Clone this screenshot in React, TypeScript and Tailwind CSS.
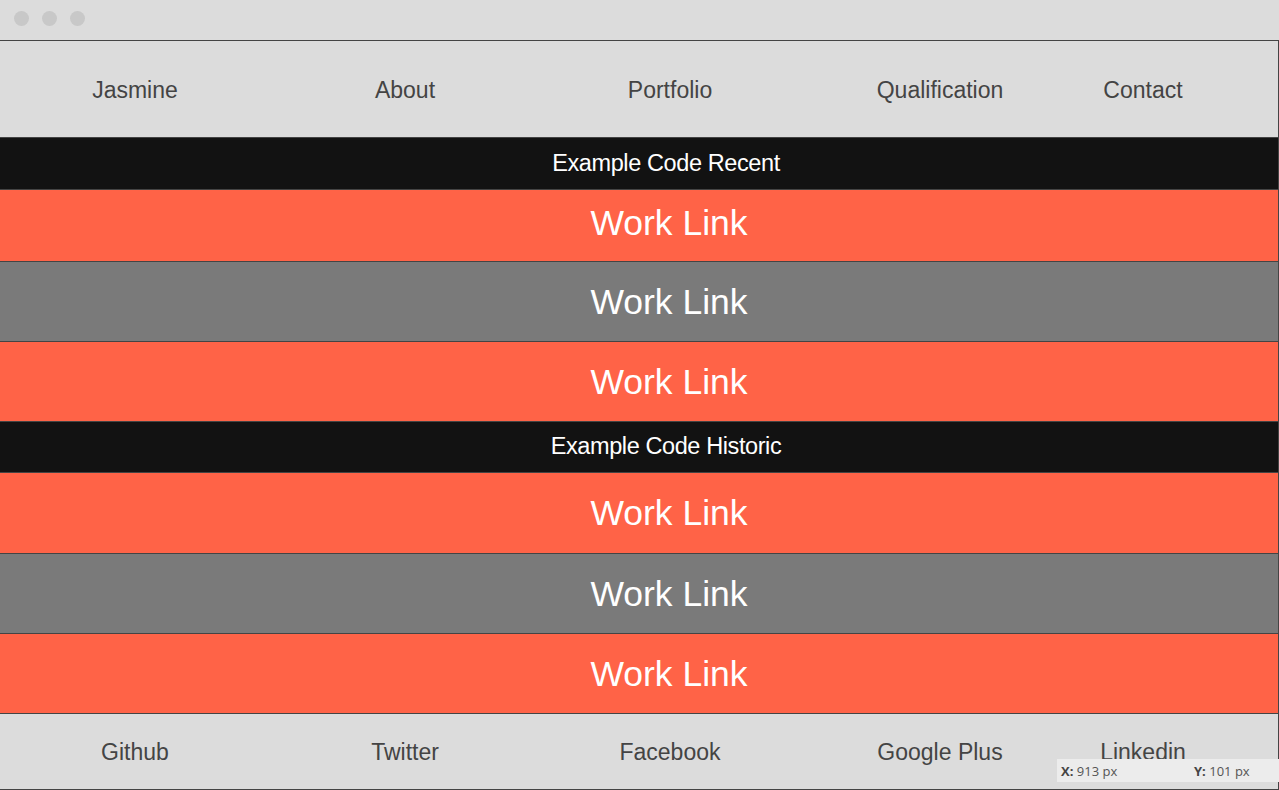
import React from "react";

const navItems = [
  { label: "Jasmine", w: "w-[270px]" },
  { label: "About", w: "w-[270px]" },
  { label: "Portfolio", w: "w-[260px]" },
  { label: "Qualification", w: "w-[280px]" },
  { label: "Contact", w: "w-[126px]" },
];

const footerItems = ["Github", "Twitter", "Facebook", "Google Plus", "Linkedin"];

function SectionHeader({ title, className }: { title: string; className?: string }) {
  return (
    <div
      className={`h-[52px] flex items-center justify-center pl-[54px] bg-[#121212] text-white text-[23.5px] tracking-[-0.4px] ${className ?? ""}`}
    >
      {title}
    </div>
  );
}

function WorkRow({
  tone,
  h = "h-[80px]",
  border = true,
  className = "",
}: {
  tone: "orange" | "gray";
  h?: string;
  border?: boolean;
  className?: string;
}) {
  return (
    <a
      href="#"
      className={`${h} flex items-center justify-center pl-[60px] pt-[2px] text-white text-[35.5px] ${
        border ? "border-t border-[#444]" : ""
      } ${tone === "orange" ? "bg-[#ff6347]" : "bg-[#7a7a7a]"} ${className}`}
    >
      Work Link
    </a>
  );
}

export default function App() {
  return (
    <div
      className="w-[1279px] h-[790px] bg-[#dcdcdc] relative overflow-hidden"
      style={{ fontFamily: '"Liberation Sans", Arial, sans-serif' }}
    >
      {/* window chrome */}
      <div className="h-[40px] flex items-start gap-[13px] pl-[14px] pt-[11px]">
        <span className="w-[15px] h-[15px] rounded-full bg-[#c8c8c8]" />
        <span className="w-[15px] h-[15px] rounded-full bg-[#c8c8c8]" />
        <span className="w-[15px] h-[15px] rounded-full bg-[#c8c8c8]" />
      </div>

      <div className="h-[750px] flex flex-col border-t border-r border-b border-[#444]">
        {/* nav */}
        <nav className="h-[96px] flex items-center pt-[2px] text-[23px] text-[#444]">
          {navItems.map((n) => (
            <a key={n.label} href="#" className={`${n.w} text-center`}>
              {n.label}
            </a>
          ))}
        </nav>

        <SectionHeader title="Example Code Recent" className="border-t border-[#444]" />
        <WorkRow tone="orange" h="h-[72px]" className="pb-[5px]" />
        <WorkRow tone="gray" />
        <WorkRow tone="orange" />

        <SectionHeader title="Example Code Historic" className="border-t border-b border-[#444]" />
        <WorkRow tone="orange" border={false} />
        <WorkRow tone="gray" />
        <WorkRow tone="orange" />

        {/* footer */}
        <footer className="h-[76px] flex items-center pt-[2px] text-[23px] text-[#444] border-t border-[#444]">
          {footerItems.map((f, i) => (
            <a key={f} href="#" className={`${navItems[i].w} text-center`}>
              {f}
            </a>
          ))}
        </footer>
      </div>

      {/* cursor coordinate overlay */}
      <div
        className="absolute left-[1057px] top-[759px] w-[222px] h-[23px] pt-[3px] bg-[#ececec] flex items-center text-[13px] text-[#555]"
        style={{ fontFamily: '"Open Sans", sans-serif' }}
      >
        <span className="w-[137px] pl-[4px]">
          <b className="font-bold text-[#444]">X:</b> 913 px
        </span>
        <span>
          <b className="font-bold text-[#444]">Y:</b> 101 px
        </span>
      </div>
    </div>
  );
}
